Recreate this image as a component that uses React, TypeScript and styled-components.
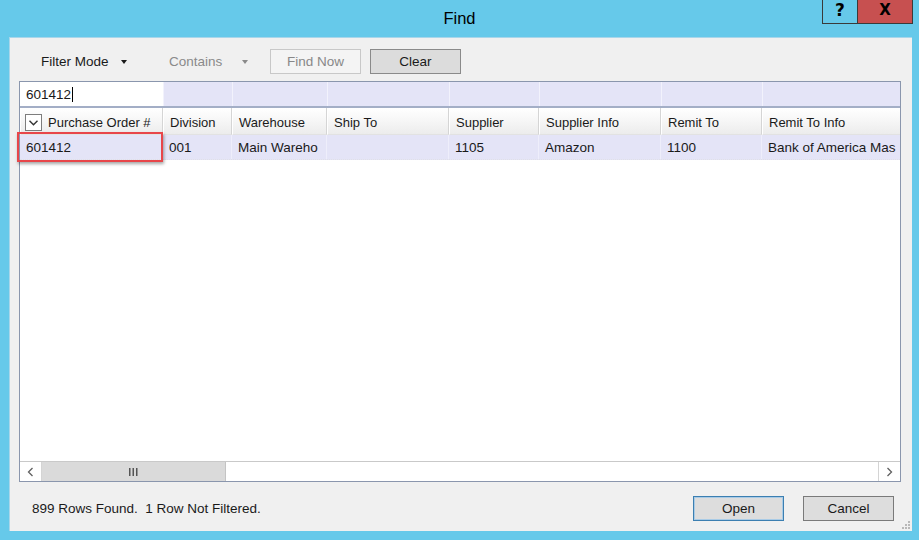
import styled, { createGlobalStyle } from "styled-components";

const GlobalStyle = createGlobalStyle`
  html, body {
    margin: 0;
    padding: 0;
  }
  body {
    font-family: "Liberation Sans", Arial, sans-serif;
    background: #66c9ea;
  }
`;

const columns = [
  { title: "Purchase Order #", width: 143 },
  { title: "Division", width: 69 },
  { title: "Warehouse", width: 95 },
  { title: "Ship To", width: 122 },
  { title: "Supplier", width: 90 },
  { title: "Supplier Info", width: 122 },
  { title: "Remit To", width: 101 },
  { title: "Remit To Info", width: 160 },
];

const gridCols = columns.map((c) => c.width + "px").join(" ");

const row = ["601412", "001", "Main Wareho", "", "1105", "Amazon", "1100", "Bank of America Mas"];

export default function App() {
  return (
    <>
      <GlobalStyle />
      <Window>
        <TitleBar>
          <Title>Find</Title>
          <Caption>
            <CaptionButton>?</CaptionButton>
            <CaptionButton $close>X</CaptionButton>
          </Caption>
        </TitleBar>
        <Client>
          <Toolbar>
            <MenuItem $w={128}>
              <span>Filter Mode</span>
              <Arrow $gap={12} />
            </MenuItem>
            <MenuItem $w={101} $disabled>
              <span>Contains</span>
              <Arrow $gap={20} $disabled />
            </MenuItem>
            <ToolButton disabled>Find Now</ToolButton>
            <ToolButton $pressed>Clear</ToolButton>
          </Toolbar>

          <GridWrap>
            <Grid>
              <FilterRow>
                <FilterInput>
                  601412<Caret />
                </FilterInput>
                {columns.slice(1).map((c) => (
                  <FilterCell key={c.title} />
                ))}
              </FilterRow>
              <HeaderRow>
                {columns.map((c, i) => (
                  <HeaderCell key={c.title}>
                    {i === 0 && (
                      <ColumnChooser>
                        <svg width="9" height="6" viewBox="0 0 9 6">
                          <polyline points="0.5,0.8 4.5,4.8 8.5,0.8" fill="none" stroke="#333" strokeWidth="1.4" />
                        </svg>
                      </ColumnChooser>
                    )}
                    {c.title}
                  </HeaderCell>
                ))}
              </HeaderRow>
              <DataRow>
                {row.map((v, i) => (
                  <DataCell key={i}>{v}</DataCell>
                ))}
              </DataRow>
              <EmptyArea />
              <HScroll>
                <ScrollArrow>
                  <svg width="7" height="10" viewBox="0 0 7 10">
                    <polyline points="5.5,1 1.5,5 5.5,9" fill="none" stroke="#606060" strokeWidth="1.3" />
                  </svg>
                </ScrollArrow>
                <Thumb>
                  <svg width="9" height="8" viewBox="0 0 9 8">
                    <rect x="0" y="0" width="1.5" height="8" fill="#555" />
                    <rect x="3.5" y="0" width="1.5" height="8" fill="#555" />
                    <rect x="7" y="0" width="1.5" height="8" fill="#555" />
                  </svg>
                </Thumb>
                <Track />
                <ScrollArrow $right>
                  <svg width="7" height="10" viewBox="0 0 7 10">
                    <polyline points="1.5,1 5.5,5 1.5,9" fill="none" stroke="#606060" strokeWidth="1.3" />
                  </svg>
                </ScrollArrow>
              </HScroll>
            </Grid>
            <Highlight />
          </GridWrap>

          <Footer>
            <Status>899 Rows Found.  1 Row Not Filtered.</Status>
            <DialogButton $default>Open</DialogButton>
            <DialogButton>Cancel</DialogButton>
          </Footer>
          <Grip width="9" height="9" viewBox="0 0 9 9">
            <rect x="7" y="1" width="2" height="2" fill="#b8b8b8" />
            <rect x="4" y="4" width="2" height="2" fill="#b8b8b8" />
            <rect x="7" y="4" width="2" height="2" fill="#b8b8b8" />
            <rect x="1" y="7" width="2" height="2" fill="#b8b8b8" />
            <rect x="4" y="7" width="2" height="2" fill="#b8b8b8" />
            <rect x="7" y="7" width="2" height="2" fill="#b8b8b8" />
          </Grip>
        </Client>
      </Window>
    </>
  );
}

const Window = styled.div`
  width: 919px;
  height: 540px;
  background: #66c9ea;
  display: flex;
  flex-direction: column;
  overflow: hidden;
`;

const TitleBar = styled.div`
  height: 37px;
  flex-shrink: 0;
  display: grid;
  grid-template-columns: 1fr auto 1fr;
`;

const Title = styled.div`
  grid-column: 2;
  padding-top: 9px;
  font-size: 16.5px;
  color: #000;
`;

const Caption = styled.div`
  grid-column: 3;
  justify-self: end;
  align-self: start;
  display: flex;
  margin-right: 6px;
  border: 1px solid #3a3a3a;
  border-top: none;
`;

const CaptionButton = styled.div<{ $close?: boolean }>`
  width: ${(p) => (p.$close ? 55 : 34)}px;
  height: 23px;
  display: flex;
  align-items: center;
  justify-content: center;
  font-family: "DejaVu Sans", sans-serif;
  font-weight: bold;
  font-size: ${(p) => (p.$close ? 15 : 17)}px;
  line-height: 1;
  padding-bottom: 2px;
  box-sizing: border-box;
  color: #000;
  background: ${(p) => (p.$close ? "#c75050" : "#66c9ea")};
  border-left: ${(p) => (p.$close ? "1px solid #3a3a3a" : "none")};
`;

const Client = styled.div`
  position: relative;
  flex: 1;
  margin: 0 7px 9px 9px;
  background: #f0f0f0;
  display: flex;
  flex-direction: column;
  box-shadow: inset 1px 1px 0 #a9d6ea;
`;

const Toolbar = styled.div`
  display: flex;
  align-items: center;
  height: 25px;
  margin-top: 12px;
  padding-left: 32px;
  font-size: 13.5px;
`;

const MenuItem = styled.div<{ $w: number; $disabled?: boolean }>`
  display: flex;
  align-items: center;
  width: ${(p) => p.$w}px;
  color: ${(p) => (p.$disabled ? "#8a8a8a" : "#1a1a1a")};
`;

const Arrow = styled.span<{ $gap: number; $disabled?: boolean }>`
  margin-left: ${(p) => p.$gap}px;
  width: 0;
  height: 0;
  border-left: 3.5px solid transparent;
  border-right: 3.5px solid transparent;
  border-top: 4px solid ${(p) => (p.$disabled ? "#8a8a8a" : "#1a1a1a")};
`;

const ToolButton = styled.button<{ $pressed?: boolean }>`
  width: 91px;
  height: 25px;
  margin-right: 9px;
  font-family: inherit;
  font-size: 13.5px;
  padding: 0;
  color: ${(p) => (p.$pressed ? "#1a1a1a" : "#888")};
  background: ${(p) => (p.$pressed ? "#dcdcdc" : "#f4f4f4")};
  border: 1px solid ${(p) => (p.$pressed ? "#8a8a8a" : "#c8c8c8")};
`;

const GridWrap = styled.div`
  position: relative;
  margin: 7px 11px 0 10px;
`;

const Grid = styled.div`
  height: 401px;
  box-sizing: border-box;
  border: 1px solid #8a96ad;
  background: #fff;
  display: flex;
  flex-direction: column;
  overflow: hidden;
  font-size: 13px;
  color: #1a1a1a;
`;

const FilterRow = styled.div`
  display: grid;
  grid-template-columns: ${gridCols};
  height: 24px;
  flex-shrink: 0;
  background: #e4e4f7;
  border-bottom: 2px solid #a3aec6;
`;

const FilterInput = styled.div`
  background: #fff;
  padding-left: 6px;
  display: flex;
  align-items: center;
  font-size: 13.5px;
`;

const Caret = styled.span`
  display: inline-block;
  width: 1px;
  height: 15px;
  margin-left: 1px;
  background: #000;
`;

const FilterCell = styled.div`
  border-left: 1px solid #f2f2fc;
`;

const HeaderRow = styled.div`
  display: grid;
  grid-template-columns: ${gridCols};
  height: 27px;
  flex-shrink: 0;
`;

const HeaderCell = styled.div`
  display: flex;
  align-items: center;
  padding: 3px 0 0 6px;
  white-space: nowrap;
  overflow: hidden;
  background: linear-gradient(#ffffff, #f7f7f7 45%, #ececec);
  border-right: 1px solid #d5d5d5;
  border-left: 1px solid #fff;
  border-bottom: 1px solid #e2e2e2;
`;

const ColumnChooser = styled.span`
  width: 15px;
  height: 15px;
  margin: 0 6px 0 -2px;
  border: 1px solid #7d7d7d;
  background: #fff;
  display: flex;
  align-items: center;
  justify-content: center;
  flex-shrink: 0;
`;

const DataRow = styled.div`
  display: grid;
  grid-template-columns: ${gridCols};
  height: 24px;
  flex-shrink: 0;
  background: #e4e4f7;
  border-bottom: 1px dotted #e0e0e8;
`;

const DataCell = styled.div`
  display: flex;
  align-items: center;
  padding-left: 6px;
  white-space: nowrap;
  overflow: hidden;
  font-size: 13.5px;
  border-right: 1px solid #eeeefb;
`;

const EmptyArea = styled.div`
  flex: 1;
`;

const HScroll = styled.div`
  display: flex;
  height: 19px;
  flex-shrink: 0;
  border-top: 1px solid #c9c9c9;
`;

const ScrollArrow = styled.div<{ $right?: boolean }>`
  width: 21px;
  display: flex;
  align-items: center;
  justify-content: center;
  background: #fff;
  border-right: ${(p) => (p.$right ? "none" : "1px solid #d4d4d4")};
  border-left: ${(p) => (p.$right ? "1px solid #d4d4d4" : "none")};
`;

const Thumb = styled.div`
  width: 183px;
  display: flex;
  align-items: center;
  justify-content: center;
  background: #dadada;
  border-right: 1px solid #c4c4c4;
`;

const Track = styled.div`
  flex: 1;
  background: #fff;
`;

const Highlight = styled.div`
  position: absolute;
  left: -2px;
  top: 51px;
  width: 146px;
  height: 30px;
  box-sizing: border-box;
  border: 2px solid #e8464a;
  box-shadow: 1px 2px 3px rgba(0, 0, 0, 0.35);
  pointer-events: none;
`;

const Footer = styled.div`
  display: flex;
  align-items: center;
  padding: 14px 18px 10px 23px;
`;

const Status = styled.div`
  flex: 1;
  white-space: pre;
  font-size: 13.5px;
  color: #1a1a1a;
`;

const DialogButton = styled.button<{ $default?: boolean }>`
  width: 91px;
  height: 25px;
  margin-left: ${(p) => (p.$default ? 0 : 19)}px;
  padding: 0;
  font-family: inherit;
  font-size: 13.5px;
  color: #1a1a1a;
  background: #dddddd;
  border: 1px solid ${(p) => (p.$default ? "#3c7fb1" : "#7a7a7a")};
  box-shadow: ${(p) => (p.$default ? "inset 0 0 0 1px #a9cbe6" : "none")};
`;

const Grip = styled.svg`
  position: absolute;
  right: 2px;
  bottom: 2px;
`;
